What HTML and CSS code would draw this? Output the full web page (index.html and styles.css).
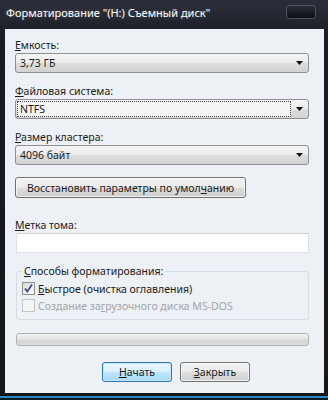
FILE: index.html
```html
<!DOCTYPE html>
<html lang="ru">
  <head>
    <meta charset="utf-8">
    <title>Форматирование "(H:) Съемный диск"</title>
    <link rel="stylesheet" href="styles.css">
  </head>
  <body>
    <div class="window">
      <div class="titlebar">
        <span class="title">Форматирование "(H:) Съемный диск"</span>
        <span class="close-btn"></span>
      </div>

      <div class="client">
        <div class="label label-first"><u>Е</u>мкость:</div>
        <div class="combo">
          <span class="combo-text">3,73 ГБ</span>
          <svg class="arrow" width="7" height="4" viewBox="0 0 7 4"><path d="M0 0h7L3.5 4z"/></svg>
        </div>

        <div class="label"><u>Ф</u>айловая система:</div>
        <div class="combo combo-focus">
          <span class="combo-text focus-rect">NTFS</span>
          <svg class="arrow" width="7" height="4" viewBox="0 0 7 4"><path d="M0 0h7L3.5 4z"/></svg>
        </div>

        <div class="label"><u>Р</u>азмер кластера:</div>
        <div class="combo">
          <span class="combo-text">4096 байт</span>
          <svg class="arrow" width="7" height="4" viewBox="0 0 7 4"><path d="M0 0h7L3.5 4z"/></svg>
        </div>

        <button type="button" class="btn btn-restore">Восстановить параметры по умол<u>ч</u>анию</button>

        <div class="label label-volume"><u>М</u>етка тома:</div>
        <div class="textbox"></div>

        <fieldset class="group">
          <legend><u>С</u>пособы форматирования:</legend>
          <div class="check-row">
            <span class="checkbox">
              <svg width="11" height="11" viewBox="0 0 11 11"><path d="M2 5.5l2.3 3L9 1.5" fill="none" stroke="#3d4f8c" stroke-width="1.8"/></svg>
            </span>
            <span><u>Б</u>ыстрое (очистка оглавления)</span>
          </div>
          <div class="check-row disabled">
            <span class="checkbox"></span>
            <span>Создание за<u>г</u>рузочного диска MS-DOS</span>
          </div>
        </fieldset>

        <div class="progress"></div>

        <div class="actions">
          <button type="button" class="btn btn-default"><u>Н</u>ачать</button>
          <button type="button" class="btn"><u>З</u>акрыть</button>
        </div>
      </div>

      <div class="frame-bottom"></div>
    </div>
  </body>
</html>
```

FILE: styles.css
```css
body {
  margin: 0;
  background: #16181f;
  font-family: "Noto Sans", "DejaVu Sans", sans-serif;
}

.window {
  width: 328px;
  height: 400px;
  display: flex;
  flex-direction: column;
  background: linear-gradient(#2b2e39, #1a1c24 40px, #14161c);
}

.titlebar {
  height: 29px;
  display: flex;
  justify-content: space-between;
  align-items: flex-start;
  padding: 0 12px 0 6px;
}

.title {
  color: #fff;
  font-size: 11px;
  line-height: 14px;
  margin-top: 6px;
  text-shadow: 0 0 4px rgba(255, 255, 255, 0.25);
}

.close-btn {
  width: 28px;
  height: 12px;
  margin-top: 5px;
  border: 1px solid #4d525e;
  border-radius: 3px;
  background: linear-gradient(#2a2d36, #0d0e12);
}

.client {
  height: 364px;
  margin: 0 4px 0 5px;
  padding: 0 15px 0 10px;
  background: #edf0f5;
  display: flex;
  flex-direction: column;
  align-items: flex-start;
  font-size: 10.5px;
  color: #1a1a1a;
}

.label {
  line-height: 14px;
  height: 14px;
  margin-top: 11px;
  margin-bottom: 1px;
}

.label-first {
  margin-top: 9px;
}

.label-volume {
  margin-top: 20px;
}

.combo {
  box-sizing: border-box;
  width: 294px;
  height: 20px;
  border: 1px solid #8d8f93;
  border-radius: 3px;
  background: linear-gradient(#f5f5f5, #ebebeb 50%, #dddddd 51%, #d2d2d2);
  display: flex;
  align-items: center;
  padding: 0 5px 0 4px;
}

.combo-text {
  flex: 1;
  line-height: 14px;
}

.combo-focus {
  padding-left: 1px;
}

.focus-rect {
  box-sizing: border-box;
  height: 16px;
  margin-right: 5px;
  padding-left: 2px;
  border: 1px dotted #444;
  background: #f4f4f4;
  line-height: 14px;
}

.arrow {
  fill: #111;
}

.btn {
  box-sizing: border-box;
  height: 21px;
  padding: 0;
  border: 1px solid #707070;
  border-radius: 3px;
  background: linear-gradient(#f2f2f2, #ebebeb 50%, #dddddd 51%, #cfcfcf);
  font-family: inherit;
  font-size: 10.5px;
  color: #1a1a1a;
  box-shadow: inset 0 0 0 1px rgba(255, 255, 255, 0.7);
}

.btn-restore {
  width: 231px;
  margin-top: 12px;
}

.textbox {
  box-sizing: border-box;
  width: 293px;
  height: 20px;
  margin-left: 1px;
  border: 1px solid #dde1e8;
  border-top-color: #cfd3da;
  background: #fff;
}

.group {
  box-sizing: border-box;
  width: 293px;
  margin: 11px 0 0 1px;
  padding: 2px 5px 5px;
  border: 1px solid #d5dce3;
  border-radius: 3px;
}

.group legend {
  padding: 0 2px;
  line-height: 14px;
}

.check-row {
  height: 17px;
  display: flex;
  align-items: center;
  gap: 3px;
}

.checkbox {
  box-sizing: border-box;
  width: 13px;
  height: 13px;
  border: 1px solid #8e8f8f;
  background: linear-gradient(135deg, #dcdcdc, #fbfbfb);
  display: flex;
  align-items: center;
  justify-content: center;
}

.disabled {
  color: #a3a6aa;
}

.disabled .checkbox {
  border-color: #c3c5c8;
  background: #f4f4f4;
}

.progress {
  box-sizing: border-box;
  width: 293px;
  height: 13px;
  margin: 13px 0 0 1px;
  border: 1px solid #b2b2b2;
  border-radius: 3px;
  background: linear-gradient(#f3f3f3, #e2e2e2 50%, #d4d4d4 51%, #dcdcdc);
}

.actions {
  display: flex;
  gap: 8px;
  margin: 16px 0 0 87px;
}

.actions .btn {
  width: 70px;
  height: 20px;
}

.btn-default {
  border-color: #2f78b0;
  background: linear-gradient(#eaf6fd, #d9f0fc 50%, #bee6fd 51%, #a7d9f5);
  box-shadow: inset 0 0 0 1px #c4e5f6;
}

.frame-bottom {
  height: 7px;
  margin-top: 0;
  background: linear-gradient(#14161c 3px, #2a8ac0 3px, #2a8ac0 5px, #0f1a26 5px);
}
```
